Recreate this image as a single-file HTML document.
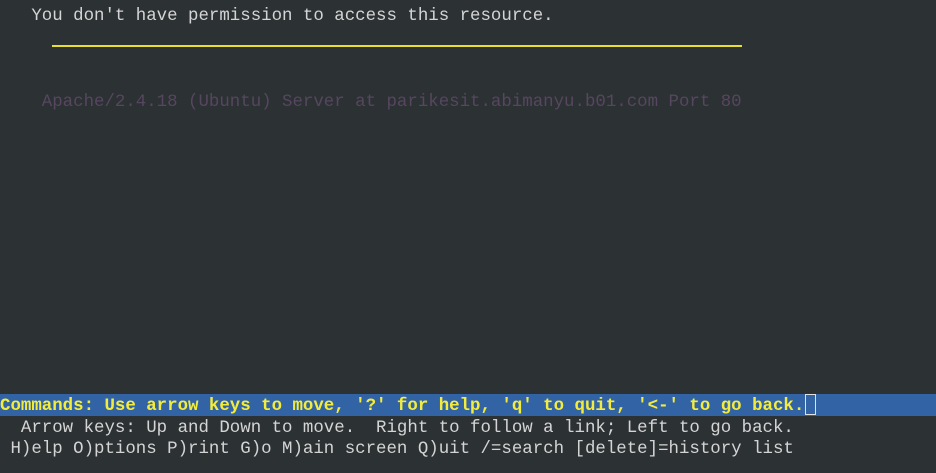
<!DOCTYPE html>
<html><head><meta charset="utf-8"><style>
html,body{margin:0;padding:0;width:936px;height:473px;overflow:hidden;background:#2c3134;}
.r{position:absolute;left:0;height:21.6px;line-height:21.6px;font-family:"Liberation Mono",monospace;font-size:17.42px;white-space:pre;color:#d4d4d4}
</style></head><body>
<div class="r" style="top:6px">   You don't have permission to access this resource.</div>
<div style="position:absolute;left:52px;top:45px;width:690px;height:2px;background:#e8e030"></div>
<div class="r" style="top:92px;color:#56465f">    Apache/2.4.18 (Ubuntu) Server at parikesit.abimanyu.b01.com Port 80</div>
<div style="position:absolute;left:0;top:394px;width:936px;height:21.5px;background:#3263a5"></div>
<div class="r" style="top:395.5px;color:#f4ec3c;font-weight:bold">Commands: Use arrow keys to move, '?' for help, 'q' to quit, '&lt;-' to go back.</div>
<div style="position:absolute;left:805px;top:394px;width:9px;height:19px;border:1px solid #e0e0e0"></div>
<div class="r" style="top:417.5px">  Arrow keys: Up and Down to move.  Right to follow a link; Left to go back.</div>
<div class="r" style="top:439px"> H)elp O)ptions P)rint G)o M)ain screen Q)uit /=search [delete]=history list</div>
</body></html>
